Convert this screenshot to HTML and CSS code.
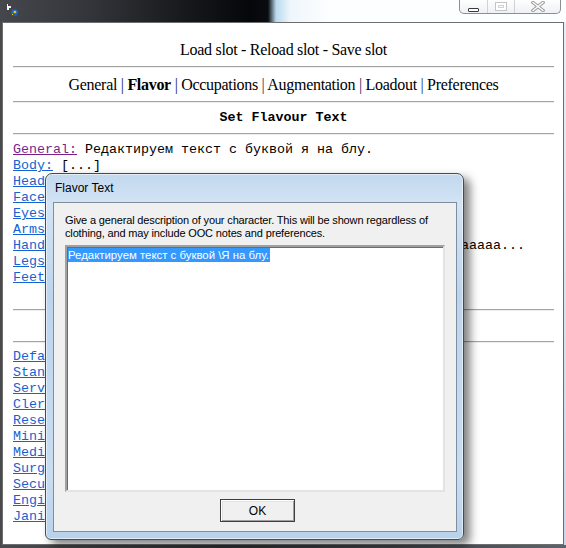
FILE: index.html
```html
<!DOCTYPE html>
<html lang="ru">
<head>
  <meta charset="UTF-8" />
  <title>Character Setup</title>
  <meta name="viewport" content="width=device-width, initial-scale=1" />
  <link rel="stylesheet" href="styles.css">
</head>
<body>
<div class="screen">

  <div class="titlebar">
    <svg class="app-icon" width="16" height="16" viewBox="0 0 16 16">
      <path d="M4 3 L5 3 L5 5 L8 5 L8 7 L6 7 L6 9 L4 9 Z" fill="#f4f4f4"/>
      <circle cx="11.5" cy="11.5" r="3.6" fill="#1f5fa8"/>
      <path d="M9 11 L12 9 L14 11 L12 13 Z" fill="#3e8ad6"/>
      <path d="M11 10 L13 10 L13 12 L11 12 Z" fill="#e8c22a"/>
      <path d="M9 13 L10 13 L10 14 L9 14 Z" fill="#e8c22a"/>
    </svg>
    <div class="caption-buttons">
      <span class="cap-btn cap-min"><i></i></span>
      <span class="cap-btn cap-max"><i></i></span>
      <span class="cap-btn cap-close">
        <svg width="14" height="11" viewBox="0 0 14 11">
          <path d="M2 1.5 L12 9.5 M12 1.5 L2 9.5" stroke="#9c9c9c" stroke-width="3.4" stroke-linecap="square"/>
          <path d="M2 1.5 L12 9.5 M12 1.5 L2 9.5" stroke="#ffffff" stroke-width="1.4" stroke-linecap="square"/>
        </svg>
      </span>
    </div>
  </div>

  <div class="middle">
    <div class="edge-left"></div>

    <div class="window">
      <div class="slots">Load slot - Reload slot - Save slot</div>
      <div class="rule"></div>
      <div class="tabs">
        General <span class="sep">|</span> <b>Flavor</b> <span class="sep">|</span> Occupations
        <span class="sep">|</span> Augmentation <span class="sep">|</span> Loadout
        <span class="sep">|</span> Preferences
      </div>
      <div class="rule"></div>
      <div class="heading">Set Flavour Text</div>
      <div class="rule"></div>

      <div class="lines">
        <div><a class="visited" href="#">General:</a> Редактируем текст с буквой я на блу.</div>
        <div><a href="#">Body:</a> [...]</div>
        <div><a href="#">Head:</a> [...]</div>
        <div><a href="#">Face:</a> [...]</div>
        <div><a href="#">Eyes:</a> [...]</div>
        <div><a href="#">Arms:</a> [...]</div>
        <div><a href="#">Hands:</a> aaaaaaaaaaaaaaaaaaaaaaaaaaaaaaaaaaaaaaaaaaaaaaaaaaaaaa...</div>
        <div><a href="#">Legs:</a> [...]</div>
        <div><a href="#">Feet:</a> [...]</div>
        <div class="blank"></div>
      </div>

      <div class="rule"></div>
      <div class="heading">Set Job Flavour Text</div>
      <div class="rule"></div>

      <div class="lines jobs">
        <div><a href="#">Default:</a> [...]</div>
        <div><a href="#">Standard:</a> [...]</div>
        <div><a href="#">Service:</a> [...]</div>
        <div><a href="#">Clerical:</a> [...]</div>
        <div><a href="#">Research:</a> [...]</div>
        <div><a href="#">Mining:</a> [...]</div>
        <div><a href="#">Medical:</a> [...]</div>
        <div><a href="#">Surgery:</a> [...]</div>
        <div><a href="#">Security:</a> [...]</div>
        <div><a href="#">Engineering:</a> [...]</div>
        <div><a href="#">Janitorial:</a> [...]</div>
      </div>
    </div>

    <div class="edge-right"></div>
  </div>

  <div class="bottom-strip"></div>

  <!-- input dialog opened over the setup window -->
  <div class="dialog">
    <div class="dialog-title">Flavor Text</div>
    <div class="dialog-body">
      <p class="prompt">Give a general description of your character. This will be shown regardless of clothing, and may include OOC notes and preferences.</p>
      <div class="text-box"><span class="sel">Редактируем текст с буквой \Я на блу.</span><span class="caret"></span></div>
      <div class="dialog-buttons">
        <button type="button" class="ok-btn">OK</button>
      </div>
    </div>
  </div>

</div>
</body>
</html>
```

FILE: styles.css
```css
body {
  margin: 0;
  background: #3a3a3a;
}
.screen {
  position: relative;
  width: 566px;
  height: 548px;
  overflow: hidden;
  display: flex;
  flex-direction: column;
}

/* top bar */
.titlebar {
  height: 22px;
  flex: none;
  display: flex;
  align-items: flex-start;
  background: linear-gradient(to right, #46474c 0, #34353a 90px, #16171b 190px, #06070a 250px, #0a0c10 268px, #b9d9ee 276px, #eef6fc 290px, #fdfeff 330px);
}
.app-icon {
  margin: 1px 0 0 3px;
}
.caption-buttons {
  margin-left: auto;
  margin-right: 5px;
  margin-top: -1px;
  display: flex;
  height: 14px;
  border: 1px solid #8e8e8e;
  border-top: none;
  border-radius: 0 0 5px 5px;
  background: linear-gradient(#ffffff, #eef1f5);
  overflow: hidden;
}
.cap-btn {
  display: flex;
  align-items: center;
  justify-content: center;
  border-left: 1px solid #cfd3d8;
}
.cap-btn:first-child {
  border-left: none;
}
.cap-min {
  width: 27px;
}
.cap-min i {
  display: block;
  width: 9px;
  height: 2px;
  margin-top: 8px;
  border: 1px solid #3a3a3a;
  border-radius: 1px;
  background: #fff;
}
.cap-max {
  width: 26px;
}
.cap-max i {
  display: block;
  width: 10px;
  height: 7px;
  margin-top: 1px;
  border: 1px solid #c4c4c4;
  box-shadow: inset 0 0 0 2px #fff, inset 0 0 0 3px #d4d4d4;
}
.cap-close {
  width: 45px;
}

/* main window */
.middle {
  display: flex;
  height: 523px;
  flex: none;
}
.edge-left {
  width: 2px;
  background: #4a4a4c;
}
.edge-right {
  flex: 1;
  background: linear-gradient(#e6eef5, #d4e2ee 60%, #c9d7e6);
}
.window {
  width: 541px;
  padding: 0 9px 0 10px;
  border: 1px solid #6d6d6d;
  background: #fff;
  overflow: hidden;
}
.bottom-strip {
  flex: 1;
  background: linear-gradient(to right, #4a4b50, #2c2d33 40%, #3c3f48 70%, #5a6470);
}

.slots, .tabs {
  font-family: "Liberation Serif", "Times New Roman", serif;
  font-size: 16px;
  letter-spacing: -0.3px;
  line-height: 18px;
  text-align: center;
  color: #000;
}
.slots {
  padding-top: 18px;
}
.tabs {
  margin-top: 8px;
}
.tabs .sep {
  color: #1c2a66;
}
.rule {
  margin-top: 7px;
  border-top: 1px solid #a3a3a3;
  border-bottom: 1px solid #eeeeee;
}
.heading {
  margin-top: 7px;
  font-family: "Liberation Mono", "Courier New", monospace;
  font-size: 13.33px;
  font-weight: bold;
  line-height: 16px;
  text-align: center;
}
.lines {
  margin-top: 7px;
  font-family: "Liberation Mono", "Courier New", monospace;
  font-size: 13.33px;
  line-height: 16px;
  color: #000;
}
.lines div {
  white-space: pre;
  height: 16px;
}
.lines.jobs {
  margin-top: 6px;
}
.lines a {
  color: #1463d2;
  text-decoration: underline;
}
.lines a.visited {
  color: #7c1f8c;
}

/* dialog */
.dialog {
  position: absolute;
  left: 45px;
  top: 173px;
  width: 419px;
  height: 367px;
  box-sizing: border-box;
  padding: 0 6px 7px 7px;
  border: 1px solid #474b50;
  border-radius: 7px 7px 6px 6px;
  background: linear-gradient(to bottom, #c2d8ee 0, #d3e4f5 30px, #bcd5ee 120px, #c8ddf2 300px, #b8d2ec 100%);
  box-shadow: inset 0 0 0 1px rgba(255, 255, 255, 0.55), 6px 5px 10px rgba(0, 0, 0, 0.5);
  display: flex;
  flex-direction: column;
}
.dialog-title {
  height: 28px;
  line-height: 28px;
  padding-left: 2px;
  font-family: "Liberation Sans", Arial, sans-serif;
  font-size: 12px;
  color: #000;
}
.dialog-body {
  flex: 1;
  border: 1px solid #7f8e9c;
  background: #f0f0f0;
  padding: 11px 0 0 11px;
  display: flex;
  flex-direction: column;
}
.prompt {
  margin: 0;
  width: 385px;
  font-family: "Liberation Sans", Arial, sans-serif;
  font-size: 11px;
  letter-spacing: -0.15px;
  line-height: 13px;
  color: #000;
}
.text-box {
  margin-top: 5px;
  width: 376px;
  height: 242px;
  padding: 1px 0 0 0;
  border: 2px solid;
  border-color: #a0a0a0 #e3e3e3 #e3e3e3 #a0a0a0;
  box-shadow: inset 1px 1px 0 #6b6b6b;
  background: #fff;
  font-family: "Liberation Sans", Arial, sans-serif;
  font-size: 11.4px;
  line-height: 14px;
  display: flex;
  align-items: flex-start;
}
.sel {
  margin-left: 1px;
  background: #3399ff;
  color: #fff;
}
.caret {
  width: 1px;
  height: 14px;
  background: #d7751a;
}
.dialog-buttons {
  margin-top: 7px;
  display: flex;
  padding-left: 155px;
}
.ok-btn {
  width: 75px;
  height: 23px;
  margin: 0;
  padding: 0;
  border: 1px solid #3f3f3f;
  box-shadow: inset 1px 1px 0 #ffffff, inset -1px -1px 0 #a0a0a0, inset 2px 2px 0 #e3e3e3;
  background: #f0f0f0;
  font-family: "Liberation Sans", Arial, sans-serif;
  font-size: 12px;
  color: #000;
}
```
